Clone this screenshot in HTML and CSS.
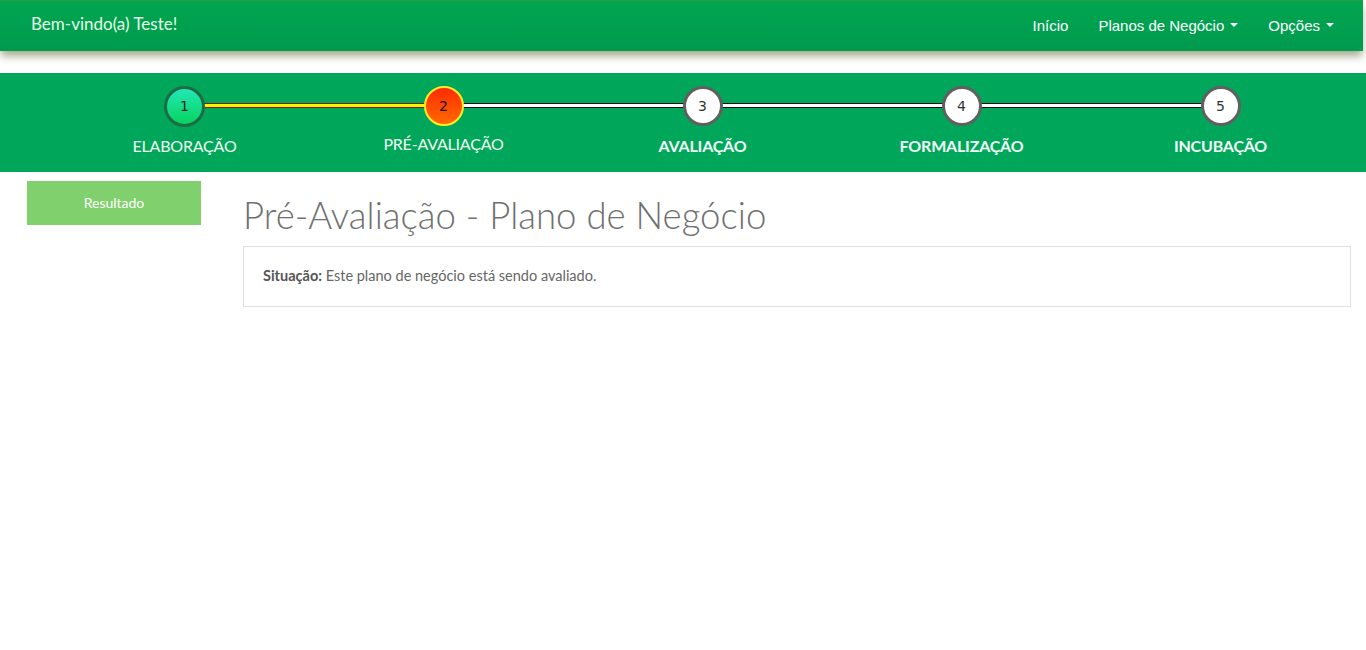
FILE: index.html
```html
<!DOCTYPE html>
<html lang="pt-BR">
<head>
<meta charset="utf-8">
<title>Pré-Avaliação - Plano de Negócio</title>
<link rel="stylesheet" href="styles.css">
</head>
<body>
<header class="navbar">
  <div class="brand">Bem-vindo(a) Teste!</div>
  <nav class="nav">
    <a class="nav-link" href="#">Início</a>
    <a class="nav-link" href="#">Planos de Negócio <span class="caret"></span></a>
    <a class="nav-link" href="#">Opções <span class="caret"></span></a>
  </nav>
</header>

<section class="steps">
  <div class="step done">
    <div class="track"><span class="line line-yellow right"></span><span class="circle">1</span></div>
    <div class="label">ELABORAÇÃO</div>
  </div>
  <div class="step current">
    <div class="track"><span class="line line-yellow left"></span><span class="line line-white right"></span><span class="circle">2</span></div>
    <div class="label">PRÉ-AVALIAÇÃO</div>
  </div>
  <div class="step todo">
    <div class="track"><span class="line line-white left"></span><span class="line line-white right"></span><span class="circle">3</span></div>
    <div class="label">AVALIAÇÃO</div>
  </div>
  <div class="step todo">
    <div class="track"><span class="line line-white left"></span><span class="line line-white right"></span><span class="circle">4</span></div>
    <div class="label">FORMALIZAÇÃO</div>
  </div>
  <div class="step todo">
    <div class="track"><span class="line line-white left"></span><span class="circle">5</span></div>
    <div class="label">INCUBAÇÃO</div>
  </div>
</section>

<main class="content">
  <aside class="sidebar">
    <a class="btn-result" href="#">Resultado</a>
  </aside>
  <div class="main">
    <h1 class="title">Pré-Avaliação - Plano de Negócio</h1>
    <div class="panel">
      <p><strong>Situação:</strong> Este plano de negócio está sendo avaliado.</p>
    </div>
  </div>
</main>
</body>
</html>
```

FILE: styles.css
```css
html, body {
  margin: 0;
  padding: 0;
  background: #fff;
}
body {
  font-family: "Source Sans Pro", Lato, "Open Sans", sans-serif;
  color: #666;
}
a { text-decoration: none; }

.navbar {
  height: 51px;
  display: flex;
  align-items: center;
  justify-content: space-between;
  background: linear-gradient(to bottom, #00a650 0%, #009a4f 100%);
  border-top: 1px solid #2e9a3a;
  box-sizing: border-box;
  box-shadow: 0 6px 8px -1px rgba(90, 100, 40, 0.55);
  margin-right: 3px;
  padding: 0 29px 0 31px;
}
.brand {
  font-family: Lato, sans-serif;
  font-size: 17px;
  color: #e6ffe6;
  margin-top: -5px;
}
.nav {
  display: flex;
  gap: 30px;
  margin-top: -2px;
}
.nav-link {
  font-family: "Liberation Sans", Arial, sans-serif;
  font-size: 15px;
  color: #fff;
  display: flex;
  align-items: center;
}
.caret {
  display: inline-block;
  width: 0;
  height: 0;
  margin-left: 6px;
  border-top: 4px solid #fff;
  border-left: 4px solid transparent;
  border-right: 4px solid transparent;
}

.steps {
  margin-top: 22px;
  height: 99px;
  background: #00a65a;
  display: flex;
  padding-left: 55px;
  box-sizing: border-box;
}
.step {
  width: 259px;
  display: flex;
  flex-direction: column;
  align-items: center;
}
.track {
  position: relative;
  width: 100%;
  height: 40px;
  margin-top: 13px;
  display: flex;
  justify-content: center;
  align-items: center;
}
.line {
  position: absolute;
  top: 17px;
  height: 3px;
  border: 1px solid #000;
  width: 50%;
  box-sizing: content-box;
}
.line.left { left: 0; border-left: none; }
.line.right { right: 0; border-right: none; }
.line-yellow { background: #ffef00; border-color: #6b2a10; }
.line-white { background: #fff; border-color: #111; }

.circle {
  position: relative;
  z-index: 1;
  width: 34px;
  height: 34px;
  border-radius: 50%;
  display: flex;
  align-items: center;
  justify-content: center;
  font-family: "DejaVu Sans", sans-serif;
  font-size: 14px;
  color: #222;
}
.done .circle {
  width: 35px;
  height: 35px;
  border: 3px solid #1f6b48;
  background: linear-gradient(to bottom, #22e8b4, #07d35e);
}
.current .circle {
  width: 36px;
  height: 36px;
  border: 2px solid #ffee1e;
  background: linear-gradient(to bottom, #ff2a00, #ff6a00);
  color: #1a0a00;
}
.todo .circle {
  width: 34px;
  height: 34px;
  border: 3px solid #5f6060;
  background: #fff;
  color: #333;
}

.label {
  margin-top: 10px;
  font-size: 16px;
  color: #f0fff0;
  letter-spacing: -0.2px;
}
.current .label { margin-top: 8px; }
.todo .label { font-weight: 700; color: #f2fff7; }

.content {
  display: flex;
  padding: 9px 15px 0 27px;
}
.sidebar {
  width: 216px;
  flex: none;
}
.btn-result {
  display: flex;
  align-items: center;
  justify-content: center;
  width: 174px;
  height: 44px;
  box-sizing: border-box;
  padding-bottom: 2px;
  background: #80d06e;
  color: #fff;
  font-size: 14px;
}
.main {
  flex: 1;
}
.title {
  margin: 13px 0 10px;
  font-size: 36.6px;
  font-weight: 300;
  line-height: 42px;
  color: #707070;
}
.panel {
  border: 1px solid #e0e0e0;
  height: 61px;
  box-sizing: border-box;
  display: flex;
  align-items: center;
  padding: 0 19px 2px;
}
.panel p {
  margin: 0;
  font-size: 14.5px;
  color: #666;
}
.panel strong { color: #555; }
```
